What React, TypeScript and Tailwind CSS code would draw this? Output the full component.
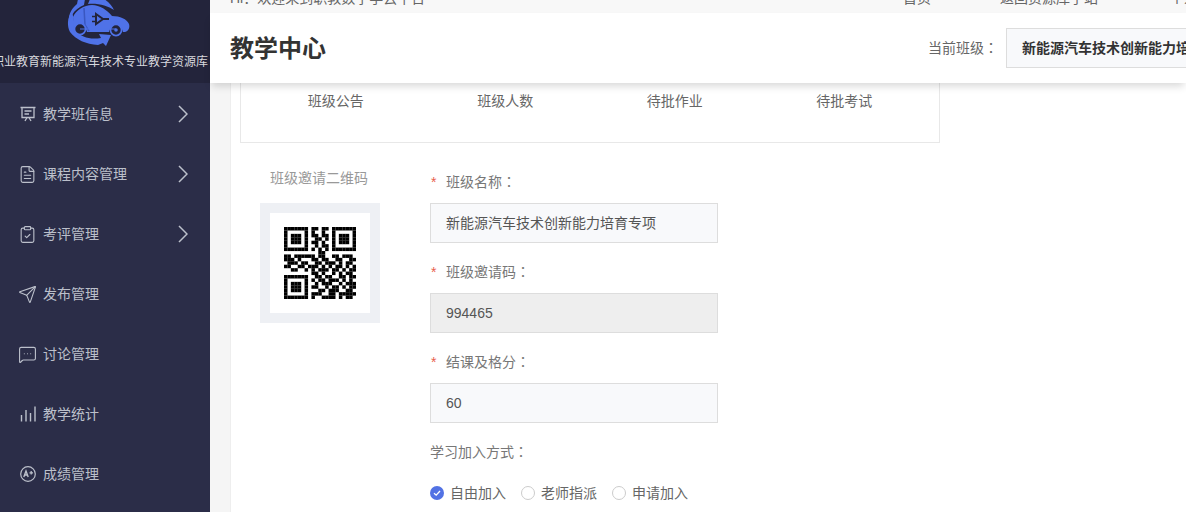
import { useMemo } from "react";
import { ClipboardCheck, FileText, MessageSquareMore, Send } from "lucide-react";

const QR_ROWS = [
  "111111101101101111111",
  "100000101001001000001",
  "101110101101101011101",
  "101110100110101011101",
  "101110101101001011101",
  "100000100101101000001",
  "111111101010101111111",
  "000000000011000000000",
  "110111111011001101110",
  "111010001101100110011",
  "011101100110111010110",
  "110011011101010110101",
  "001100101011101101011",
  "000000001101001010110",
  "111111100110110011011",
  "100000101011011101010",
  "101110100101110010111",
  "101110101100101101011",
  "101110100011011100110",
  "100000101110011011111",
  "111111101001111010110",
];

function QrCode() {
  const cells = useMemo(() => {
    const out: { x: number; y: number }[] = [];
    QR_ROWS.forEach((row, y) => {
      row.split("").forEach((c, x) => {
        if (c === "1") out.push({ x, y });
      });
    });
    return out;
  }, []);
  return (
    <svg viewBox="0 0 21 21" className="h-[72px] w-[72px]">
      {cells.map((c) => (
        <rect key={`${c.x}-${c.y}`} x={c.x} y={c.y} width="1.02" height="1.02" fill="#000" />
      ))}
    </svg>
  );
}

function Logo() {
  return (
    <svg viewBox="60 0 80 50" className="h-[50px] w-[80px]">
      <path d="M72 12 C67 19 67 27 70 33 C76 41 86 45 98 46 L103 44 L106 47 L111 36 L99 35 L101 39 C90 41 81 38 76 32 Z" fill="#4f72e8" />
      <path d="M78 0 L85 0 L84 6 C79 8 75 11 72 16 L69 24 C68 16 71 10 77 5 Z M90 0 L104 0 C109 3 112 7 114 11 C108 7 98 4 88 5 Z" fill="#4f72e8" />
      <path d="M74 29 L73 18 C76 11 84 6 92 6 C100 6 107 11 112 17 C120 17 127 20 129 25 C130 28 129 32 125 33 L123 33 C122 25 110 25 109 33 L87 33 C86 26 78 25 74 29 Z" fill="#4f72e8" />
      <path d="M84 9 L85 26 L89 32" fill="none" stroke="#3a57c0" strokeWidth="1.5" />
      <circle cx="80" cy="30" r="5.6" fill="#23243b" stroke="#4f72e8" strokeWidth="1.8" />
      <circle cx="116" cy="31" r="5.6" fill="#23243b" stroke="#4f72e8" strokeWidth="1.8" />
      <circle cx="116" cy="31" r="1.8" fill="#4f72e8" />
      <path d="M80 30 H116" stroke="#4f72e8" strokeWidth="1.2" />
      <path d="M96 15 L103 20 L96 25 Z M103 20 L109 20" fill="none" stroke="#23243b" strokeWidth="2" />
      <path d="M92 17.5 L97 17.5 M92 22.5 L97 22.5" stroke="#23243b" strokeWidth="1.5" />
    </svg>
  );
}

function BoardIcon() {
  return (
    <svg viewBox="0 0 16 16" className="h-4 w-4" fill="none" stroke="currentColor" strokeWidth="1.3">
      <path d="M0.5 1.5 H15.5 M2 1.5 V11.5 H14 V1.5" />
      <path d="M4.5 5 H11.5 M4.5 8 H9" />
      <path d="M5 15 L7 11.5 M11 15 L9 11.5" />
    </svg>
  );
}

function BarsIcon() {
  return (
    <svg viewBox="0 0 16 16" className="h-4 w-4" fill="none" stroke="currentColor" strokeWidth="1.4">
      <path d="M1.5 15.5 V9 M6 15.5 V4 M10.5 15.5 V7 M15 15.5 V0.5" />
    </svg>
  );
}

function GradeIcon() {
  return (
    <svg viewBox="0 0 16 16" className="h-4 w-4" fill="none" stroke="currentColor" strokeWidth="1.2">
      <circle cx="8" cy="8" r="7.3" />
      <path d="M3.8 11 L6 5 L8.2 11 M4.6 9 H7.4" strokeWidth="1.4" />
      <path d="M9.5 6.8 H13 M11.2 5 V8.6" strokeWidth="1.3" />
    </svg>
  );
}

const iconProps = { size: 19, strokeWidth: 1.4, className: "-ml-[2px]" };

const NAV = [
  { label: "教学班信息", icon: <BoardIcon />, arrow: true },
  { label: "课程内容管理", icon: <FileText {...iconProps} />, arrow: true },
  { label: "考评管理", icon: <ClipboardCheck {...iconProps} />, arrow: true },
  { label: "发布管理", icon: <Send {...iconProps} />, arrow: false },
  { label: "讨论管理", icon: <MessageSquareMore {...iconProps} />, arrow: false },
  { label: "教学统计", icon: <BarsIcon />, arrow: false },
  { label: "成绩管理", icon: <GradeIcon />, arrow: false },
];

const STATS = ["班级公告", "班级人数", "待批作业", "待批考试"];

const FIELDS = [
  { label: "班级名称", value: "新能源汽车技术创新能力培育专项", disabled: false },
  { label: "班级邀请码", value: "994465", disabled: true },
  { label: "结课及格分", value: "60", disabled: false },
];

function Colon() {
  return <span className="font-['Noto_Sans_CJK_TC',sans-serif] leading-none">：</span>;
}

function Radio({ label, checked }: { label: string; checked?: boolean }) {
  return (
    <div className="flex items-center gap-[6px]">
      {checked ? (
        <span className="flex h-[14px] w-[14px] items-center justify-center rounded-full bg-[#5272e4]">
          <svg viewBox="0 0 14 14" className="h-[14px] w-[14px]" fill="none" stroke="#fff" strokeWidth="1.3">
            <path d="M4 7.2 L6.2 9.2 L10 5" />
          </svg>
        </span>
      ) : (
        <span className="h-[14px] w-[14px] rounded-full border border-[#ccc] bg-white" />
      )}
      <span className="text-[14px] leading-5 text-[#666]">{label}</span>
    </div>
  );
}

export default function App() {
  return (
    <div className="flex h-[512px] w-[1186px] overflow-hidden bg-white font-['Liberation_Sans','Noto_Sans_CJK_SC',sans-serif]">
      <aside className="flex w-[210px] shrink-0 flex-col bg-[#2b2d48]">
        <div className="relative h-[83px] shrink-0 overflow-hidden bg-[#23243b]">
          <div className="-mt-[1px] flex justify-center pr-[10px]">
            <Logo />
          </div>
          <div className="-ml-[8px] mt-[3px] whitespace-nowrap text-[12px] leading-5 text-[#d8d9de]">
            职业教育新能源汽车技术专业教学资源库
          </div>
        </div>
        {NAV.map((item) => (
          <div key={item.label} className="flex h-[60px] shrink-0 items-center pl-[20px] pr-[22px] pt-[2px] text-[#bcc0cb]">
            <span className="flex w-[23px] shrink-0">{item.icon}</span>
            <span className="text-[14px]">{item.label}</span>
            {item.arrow && (
              <svg viewBox="0 0 10 18" className="ml-auto h-[18px] w-[10px]" fill="none" stroke="currentColor" strokeWidth="1.5">
                <path d="M1 1 L9 9 L1 17" />
              </svg>
            )}
          </div>
        ))}
      </aside>

      <main className="flex min-w-0 flex-1 flex-col bg-[#f5f5f5]">
        <div className="h-[13px] shrink-0 overflow-hidden bg-[#f8f8f8]">
          <div className="-mt-[12px] flex whitespace-nowrap pl-[20px] text-[14px] leading-5 text-[#666]">
            <span className="w-[195px]">Hi：欢迎来到职教数字学云平台</span>
            <span className="ml-[478px]">首页</span>
            <span className="ml-[69px]">返回资源库子站</span>
            <span className="ml-[72px]">个人中心</span>
          </div>
        </div>

        <header className="relative z-10 flex h-[70px] shrink-0 items-center bg-white pl-[20px] shadow-[0_5px_8px_-2px_rgba(0,0,0,0.16)]">
          <h1 className="pt-[2px] text-[24px] font-bold text-[#333]">教学中心</h1>
          <div className="ml-auto flex w-[258px] shrink-0 items-center overflow-hidden">
            <span className="w-[78px] shrink-0 text-[14px] text-[#666]">
              当前班级
              <Colon />
            </span>
            <div className="flex h-[40px] w-[300px] shrink-0 items-center whitespace-nowrap border border-[#ddd] bg-[#f8f9fb] pl-[15px] text-[14px] font-bold text-[#333]">
              新能源汽车技术创新能力培育专项
            </div>
          </div>
        </header>

        <div className="ml-[20px] min-h-0 flex-1 overflow-hidden border-l border-[#eee] bg-white pl-[9px]">
          <div className="grid h-[60px] w-[700px] grid-cols-4 border-x border-b border-[#e8e8e8] px-[10px] pt-[8px]">
            {STATS.map((s) => (
              <div key={s} className="text-center text-[14px] leading-5 text-[#666]">
                {s}
              </div>
            ))}
          </div>

          <div className="mt-[25px] flex pl-[20px]">
            <div className="flex w-[120px] shrink-0 flex-col items-center">
              <div className="mb-[15px] whitespace-nowrap pr-[2px] text-[14px] leading-5 text-[#999]">班级邀请二维码</div>
              <div className="flex h-[120px] w-[120px] items-center justify-center bg-[#eef0f4]">
                <div className="flex h-[100px] w-[100px] items-center justify-center bg-white">
                  <QrCode />
                </div>
              </div>
            </div>

            <div className="ml-[50px] flex flex-col pt-[4px]">
              {FIELDS.map((f) => (
                <div key={f.label} className="mb-[19px]">
                  <div className="mb-[11px] flex items-center text-[14px] leading-5 text-[#777]">
                    <span className="w-[16px] pl-[1px] text-[14px] text-[#e8604c]">*</span>
                    <span>
                      {f.label}
                      <Colon />
                    </span>
                  </div>
                  <div
                    className={`flex h-[40px] w-[288px] items-center border border-[#ddd] pl-[15px] text-[14px] text-[#555] ${
                      f.disabled ? "bg-[#eeeeee]" : "bg-[#f8f9fb]"
                    }`}
                  >
                    {f.value}
                  </div>
                </div>
              ))}
              <div className="mb-[21px] text-[14px] leading-5 text-[#777]">
                学习加入方式
                <Colon />
              </div>
              <div className="flex gap-[15px]">
                <Radio label="自由加入" checked />
                <Radio label="老师指派" />
                <Radio label="申请加入" />
              </div>
            </div>
          </div>
        </div>
      </main>
    </div>
  );
}
